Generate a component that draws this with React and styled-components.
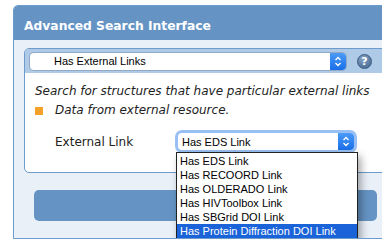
import React from "react";
import styled, { createGlobalStyle } from "styled-components";

const GlobalStyle = createGlobalStyle`
  body {
    margin: 0;
    background: #ffffff;
    overflow: hidden;
  }
`;

const Page = styled.div`
  padding: 5px 0 0 13px;
  width: 420px;
`;

const Panel = styled.div`
  width: 400px;
  height: 232px;
  border: 1px solid #6d9bcc;
  border-radius: 5px 5px 0 0;
  background: #e9f0f8;
  overflow: hidden;
`;

const Header = styled.div`
  display: flex;
  align-items: center;
  height: 28px;
  padding: 6px 0 0 10px;
  background: #6594c4;
  color: #ffffff;
  font-family: "DejaVu Sans", sans-serif;
  font-weight: bold;
  font-size: 12.3px;
`;

const Body = styled.div`
  padding: 8px 0 0 10px;
`;

const Box = styled.div`
  position: relative;
  width: 370px;
  border: 1px solid #6d9bcc;
  border-radius: 5px;
  background: #ffffff;
`;

const BoxTop = styled.div`
  display: flex;
  align-items: center;
  gap: 11px;
  height: 24px;
  padding-left: 5px;
  background: #aecae6;
  border-radius: 4px 4px 0 0;
`;

const SelectBox = styled.div`
  display: flex;
  align-items: center;
  width: ${(p) => p.width}px;
  height: 17px;
  background: #ffffff;
  border-radius: 4px;
  box-shadow: ${(p) =>
    p.focused
      ? "0 0 0 3px rgba(110, 165, 240, 0.7)"
      : "0 0 0 1px rgba(90, 110, 140, 0.35)"};
  font-family: "Liberation Sans", Arial, sans-serif;
  font-size: 11px;
  color: #000;
`;

const SelectText = styled.span`
  flex: 1;
  padding-left: ${(p) => p.indent}px;
`;

const ArrowButton = styled.span`
  display: flex;
  align-items: center;
  justify-content: center;
  width: 16px;
  height: 17px;
  border-radius: 0 4px 4px 0;
  background: linear-gradient(#4a9af7, #1a6fe9);
`;

const HelpIcon = styled.span`
  display: flex;
  align-items: center;
  justify-content: center;
  width: 13px;
  height: 13px;
  border: 1px solid #3a5a82;
  border-radius: 50%;
  background: radial-gradient(circle at 40% 30%, #8aa6c6, #3d5f8a);
  color: #ffffff;
  font-family: "DejaVu Sans", sans-serif;
  font-weight: bold;
  font-size: 11px;
`;

const Content = styled.div`
  padding: 9px 0 22px 10px;
  font-family: "DejaVu Sans", sans-serif;
  font-size: 12px;
  color: #222;
`;

const Description = styled.p`
  margin: 0;
  font-style: italic;
  line-height: 19px;
`;

const Note = styled.p`
  display: flex;
  align-items: center;
  gap: 12px;
  margin: 0;
  font-style: italic;
  line-height: 19px;
`;

const Swatch = styled.span`
  width: 8px;
  height: 8px;
  background: #f4a227;
`;

const FieldRow = styled.div`
  display: flex;
  align-items: center;
  margin-top: 13px;
  padding-left: 20px;
`;

const FieldLabel = styled.span`
  width: 123px;
  font-size: 12px;
`;

const FieldControl = styled.div`
  position: relative;
`;

const DropList = styled.ul`
  position: absolute;
  top: 19px;
  left: -2px;
  width: 180px;
  margin: 0;
  padding: 1px 0;
  list-style: none;
  background: #ffffff;
  border: 1px solid #222;
  box-shadow: 3px 4px 8px rgba(0, 0, 0, 0.35);
  font-family: "Liberation Sans", Arial, sans-serif;
  font-size: 11px;
  z-index: 2;
`;

const DropItem = styled.li`
  height: 14px;
  line-height: 14px;
  padding-left: 3px;
  color: ${(p) => (p.active ? "#ffffff" : "#000")};
  background: ${(p) => (p.active ? "#1a63d8" : "transparent")};
`;

const SubmitBar = styled.div`
  width: 343px;
  height: 31px;
  margin: 17px 0 0 10px;
  border-radius: 5px;
  background: #6594c4;
`;

const Chevrons = () => (
  <svg width="8" height="11" viewBox="0 0 8 11">
    <path d="M1.5 4 L4 1.5 L6.5 4" fill="none" stroke="#fff" strokeWidth="1.4" />
    <path d="M1.5 7 L4 9.5 L6.5 7" fill="none" stroke="#fff" strokeWidth="1.4" />
  </svg>
);

const links = [
  "Has EDS Link",
  "Has RECOORD Link",
  "Has OLDERADO Link",
  "Has HIVToolbox Link",
  "Has SBGrid DOI Link",
  "Has Protein Diffraction DOI Link",
];

const App = () => {
  return (
    <Page>
      <GlobalStyle />
      <Panel>
        <Header>Advanced Search Interface</Header>
        <Body>
          <Box>
            <BoxTop>
              <SelectBox width={316}>
                <SelectText indent={24}>Has External Links</SelectText>
                <ArrowButton>
                  <Chevrons />
                </ArrowButton>
              </SelectBox>
              <HelpIcon>?</HelpIcon>
            </BoxTop>
            <Content>
              <Description>
                Search for structures that have particular external links
              </Description>
              <Note>
                <Swatch />
                Data from external resource.
              </Note>
              <FieldRow>
                <FieldLabel>External Link</FieldLabel>
                <FieldControl>
                  <SelectBox width={176} focused>
                    <SelectText indent={4}>Has EDS Link</SelectText>
                    <ArrowButton>
                      <Chevrons />
                    </ArrowButton>
                  </SelectBox>
                  <DropList>
                    {links.map((l, i) => (
                      <DropItem key={l} active={i === links.length - 1}>
                        {l}
                      </DropItem>
                    ))}
                  </DropList>
                </FieldControl>
              </FieldRow>
            </Content>
          </Box>
          <SubmitBar />
        </Body>
      </Panel>
    </Page>
  );
};

export default App;
